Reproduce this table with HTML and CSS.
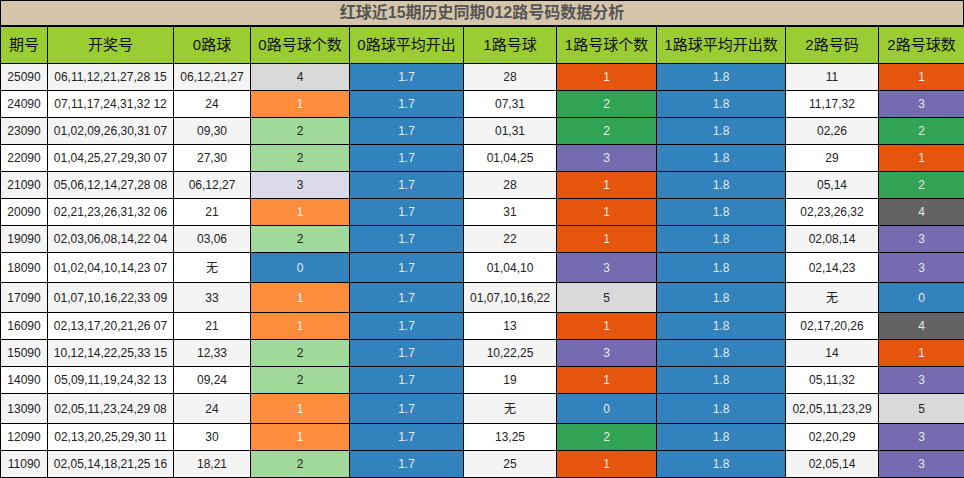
FILE: index.html
```html
<!DOCTYPE html>
<html lang="zh">
<head>
<meta charset="utf-8">
<title>红球近15期历史同期012路号码数据分析</title>
<link rel="stylesheet" href="styles.css">
</head>
<body>
<div class="title">红球近15期历史同期012路号码数据分析</div>
<table class="grid">
<colgroup>
<col class="c1"><col class="c2"><col class="c3"><col class="c4"><col class="c5">
<col class="c6"><col class="c7"><col class="c8"><col class="c9"><col class="c10">
</colgroup>
<thead>
<tr><th>期号</th><th>开奖号</th><th>0路球</th><th>0路号球个数</th><th>0路球平均开出</th><th>1路号球</th><th>1路号球个数</th><th>1路球平均开出数</th><th>2路号码</th><th>2路号球数</th></tr>
</thead>
<tbody>
<tr><td>25090</td><td>06,11,12,21,27,28 15</td><td>06,12,21,27</td><td class="k-gray">4</td><td class="k-blue">1.7</td><td>28</td><td class="k-red">1</td><td class="k-blue">1.8</td><td>11</td><td class="k-red">1</td></tr>
<tr><td>24090</td><td>07,11,17,24,31,32 12</td><td>24</td><td class="k-orange">1</td><td class="k-blue">1.7</td><td>07,31</td><td class="k-green">2</td><td class="k-blue">1.8</td><td>11,17,32</td><td class="k-purple">3</td></tr>
<tr><td>23090</td><td>01,02,09,26,30,31 07</td><td>09,30</td><td class="k-lgreen">2</td><td class="k-blue">1.7</td><td>01,31</td><td class="k-green">2</td><td class="k-blue">1.8</td><td>02,26</td><td class="k-green">2</td></tr>
<tr><td>22090</td><td>01,04,25,27,29,30 07</td><td>27,30</td><td class="k-lgreen">2</td><td class="k-blue">1.7</td><td>01,04,25</td><td class="k-purple">3</td><td class="k-blue">1.8</td><td>29</td><td class="k-red">1</td></tr>
<tr><td>21090</td><td>05,06,12,14,27,28 08</td><td>06,12,27</td><td class="k-lav">3</td><td class="k-blue">1.7</td><td>28</td><td class="k-red">1</td><td class="k-blue">1.8</td><td>05,14</td><td class="k-green">2</td></tr>
<tr><td>20090</td><td>02,21,23,26,31,32 06</td><td>21</td><td class="k-orange">1</td><td class="k-blue">1.7</td><td>31</td><td class="k-red">1</td><td class="k-blue">1.8</td><td>02,23,26,32</td><td class="k-dgray">4</td></tr>
<tr><td>19090</td><td>02,03,06,08,14,22 04</td><td>03,06</td><td class="k-lgreen">2</td><td class="k-blue">1.7</td><td>22</td><td class="k-red">1</td><td class="k-blue">1.8</td><td>02,08,14</td><td class="k-purple">3</td></tr>
<tr class="tall"><td>18090</td><td>01,02,04,10,14,23 07</td><td>无</td><td class="k-blue">0</td><td class="k-blue">1.7</td><td>01,04,10</td><td class="k-purple">3</td><td class="k-blue">1.8</td><td>02,14,23</td><td class="k-purple">3</td></tr>
<tr class="tall"><td>17090</td><td>01,07,10,16,22,33 09</td><td>33</td><td class="k-orange">1</td><td class="k-blue">1.7</td><td>01,07,10,16,22</td><td class="k-gray">5</td><td class="k-blue">1.8</td><td>无</td><td class="k-blue">0</td></tr>
<tr><td>16090</td><td>02,13,17,20,21,26 07</td><td>21</td><td class="k-orange">1</td><td class="k-blue">1.7</td><td>13</td><td class="k-red">1</td><td class="k-blue">1.8</td><td>02,17,20,26</td><td class="k-dgray">4</td></tr>
<tr><td>15090</td><td>10,12,14,22,25,33 15</td><td>12,33</td><td class="k-lgreen">2</td><td class="k-blue">1.7</td><td>10,22,25</td><td class="k-purple">3</td><td class="k-blue">1.8</td><td>14</td><td class="k-red">1</td></tr>
<tr><td>14090</td><td>05,09,11,19,24,32 13</td><td>09,24</td><td class="k-lgreen">2</td><td class="k-blue">1.7</td><td>19</td><td class="k-red">1</td><td class="k-blue">1.8</td><td>05,11,32</td><td class="k-purple">3</td></tr>
<tr class="tall"><td>13090</td><td>02,05,11,23,24,29 08</td><td>24</td><td class="k-orange">1</td><td class="k-blue">1.7</td><td>无</td><td class="k-blue">0</td><td class="k-blue">1.8</td><td>02,05,11,23,29</td><td class="k-gray">5</td></tr>
<tr><td>12090</td><td>02,13,20,25,29,30 11</td><td>30</td><td class="k-orange">1</td><td class="k-blue">1.7</td><td>13,25</td><td class="k-green">2</td><td class="k-blue">1.8</td><td>02,20,29</td><td class="k-purple">3</td></tr>
<tr><td>11090</td><td>02,05,14,18,21,25 16</td><td>18,21</td><td class="k-lgreen">2</td><td class="k-blue">1.7</td><td>25</td><td class="k-red">1</td><td class="k-blue">1.8</td><td>02,05,14</td><td class="k-purple">3</td></tr>
</tbody>
</table>
</body>
</html>
```
FILE: styles.css
```css
html, body {
  margin: 0;
  padding: 0;
  background: #ffffff;
}
body {
  font-family: "Liberation Sans", "Noto Sans CJK SC", sans-serif;
  width: 964px;
}
.title {
  box-sizing: border-box;
  height: 26px;
  border: 1px solid #000;
  background: #d5c5aa;
  color: #555;
  font-weight: bold;
  font-size: 16px;
  line-height: 24px;
  text-align: center;
}
.grid {
  width: 964px;
  table-layout: fixed;
  border-collapse: collapse;
  color: #222;
}
.c1 { width: 47px; }
.c2 { width: 126px; }
.c3 { width: 77px; }
.c4 { width: 99px; }
.c5 { width: 114px; }
.c6 { width: 93px; }
.c7 { width: 100px; }
.c8 { width: 129px; }
.c9 { width: 93px; }
.c10 { width: 86px; }
.grid th, .grid td {
  border: 1px solid #000;
  padding: 0;
  text-align: center;
  vertical-align: middle;
  white-space: nowrap;
  overflow: hidden;
}
.grid th {
  background: #9acd32;
  font-weight: normal;
  font-size: 15px;
  color: #111;
  height: 36px;
  line-height: 20px;
}
.grid td {
  font-size: 12px;
  height: 26px;
  line-height: 14px;
}
.grid tr.tall td {
  height: 29px;
}
.grid tbody tr:nth-child(odd) { background: #f4f4f4; }
.grid tbody tr:nth-child(even) { background: #ffffff; }
.k-blue { background: #3182bd; color: #e8e8e8; }
.k-red { background: #e6550d; color: #e8e8e8; }
.k-orange { background: #fd8d3c; color: #f0f0f0; }
.k-green { background: #31a354; color: #e8e8e8; }
.k-lgreen { background: #a1d99b; color: #222; }
.k-purple { background: #756bb1; color: #e8e8e8; }
.k-lav { background: #dadaeb; color: #222; }
.k-gray { background: #d9d9d9; color: #222; }
.k-dgray { background: #636363; color: #e8e8e8; }
```
